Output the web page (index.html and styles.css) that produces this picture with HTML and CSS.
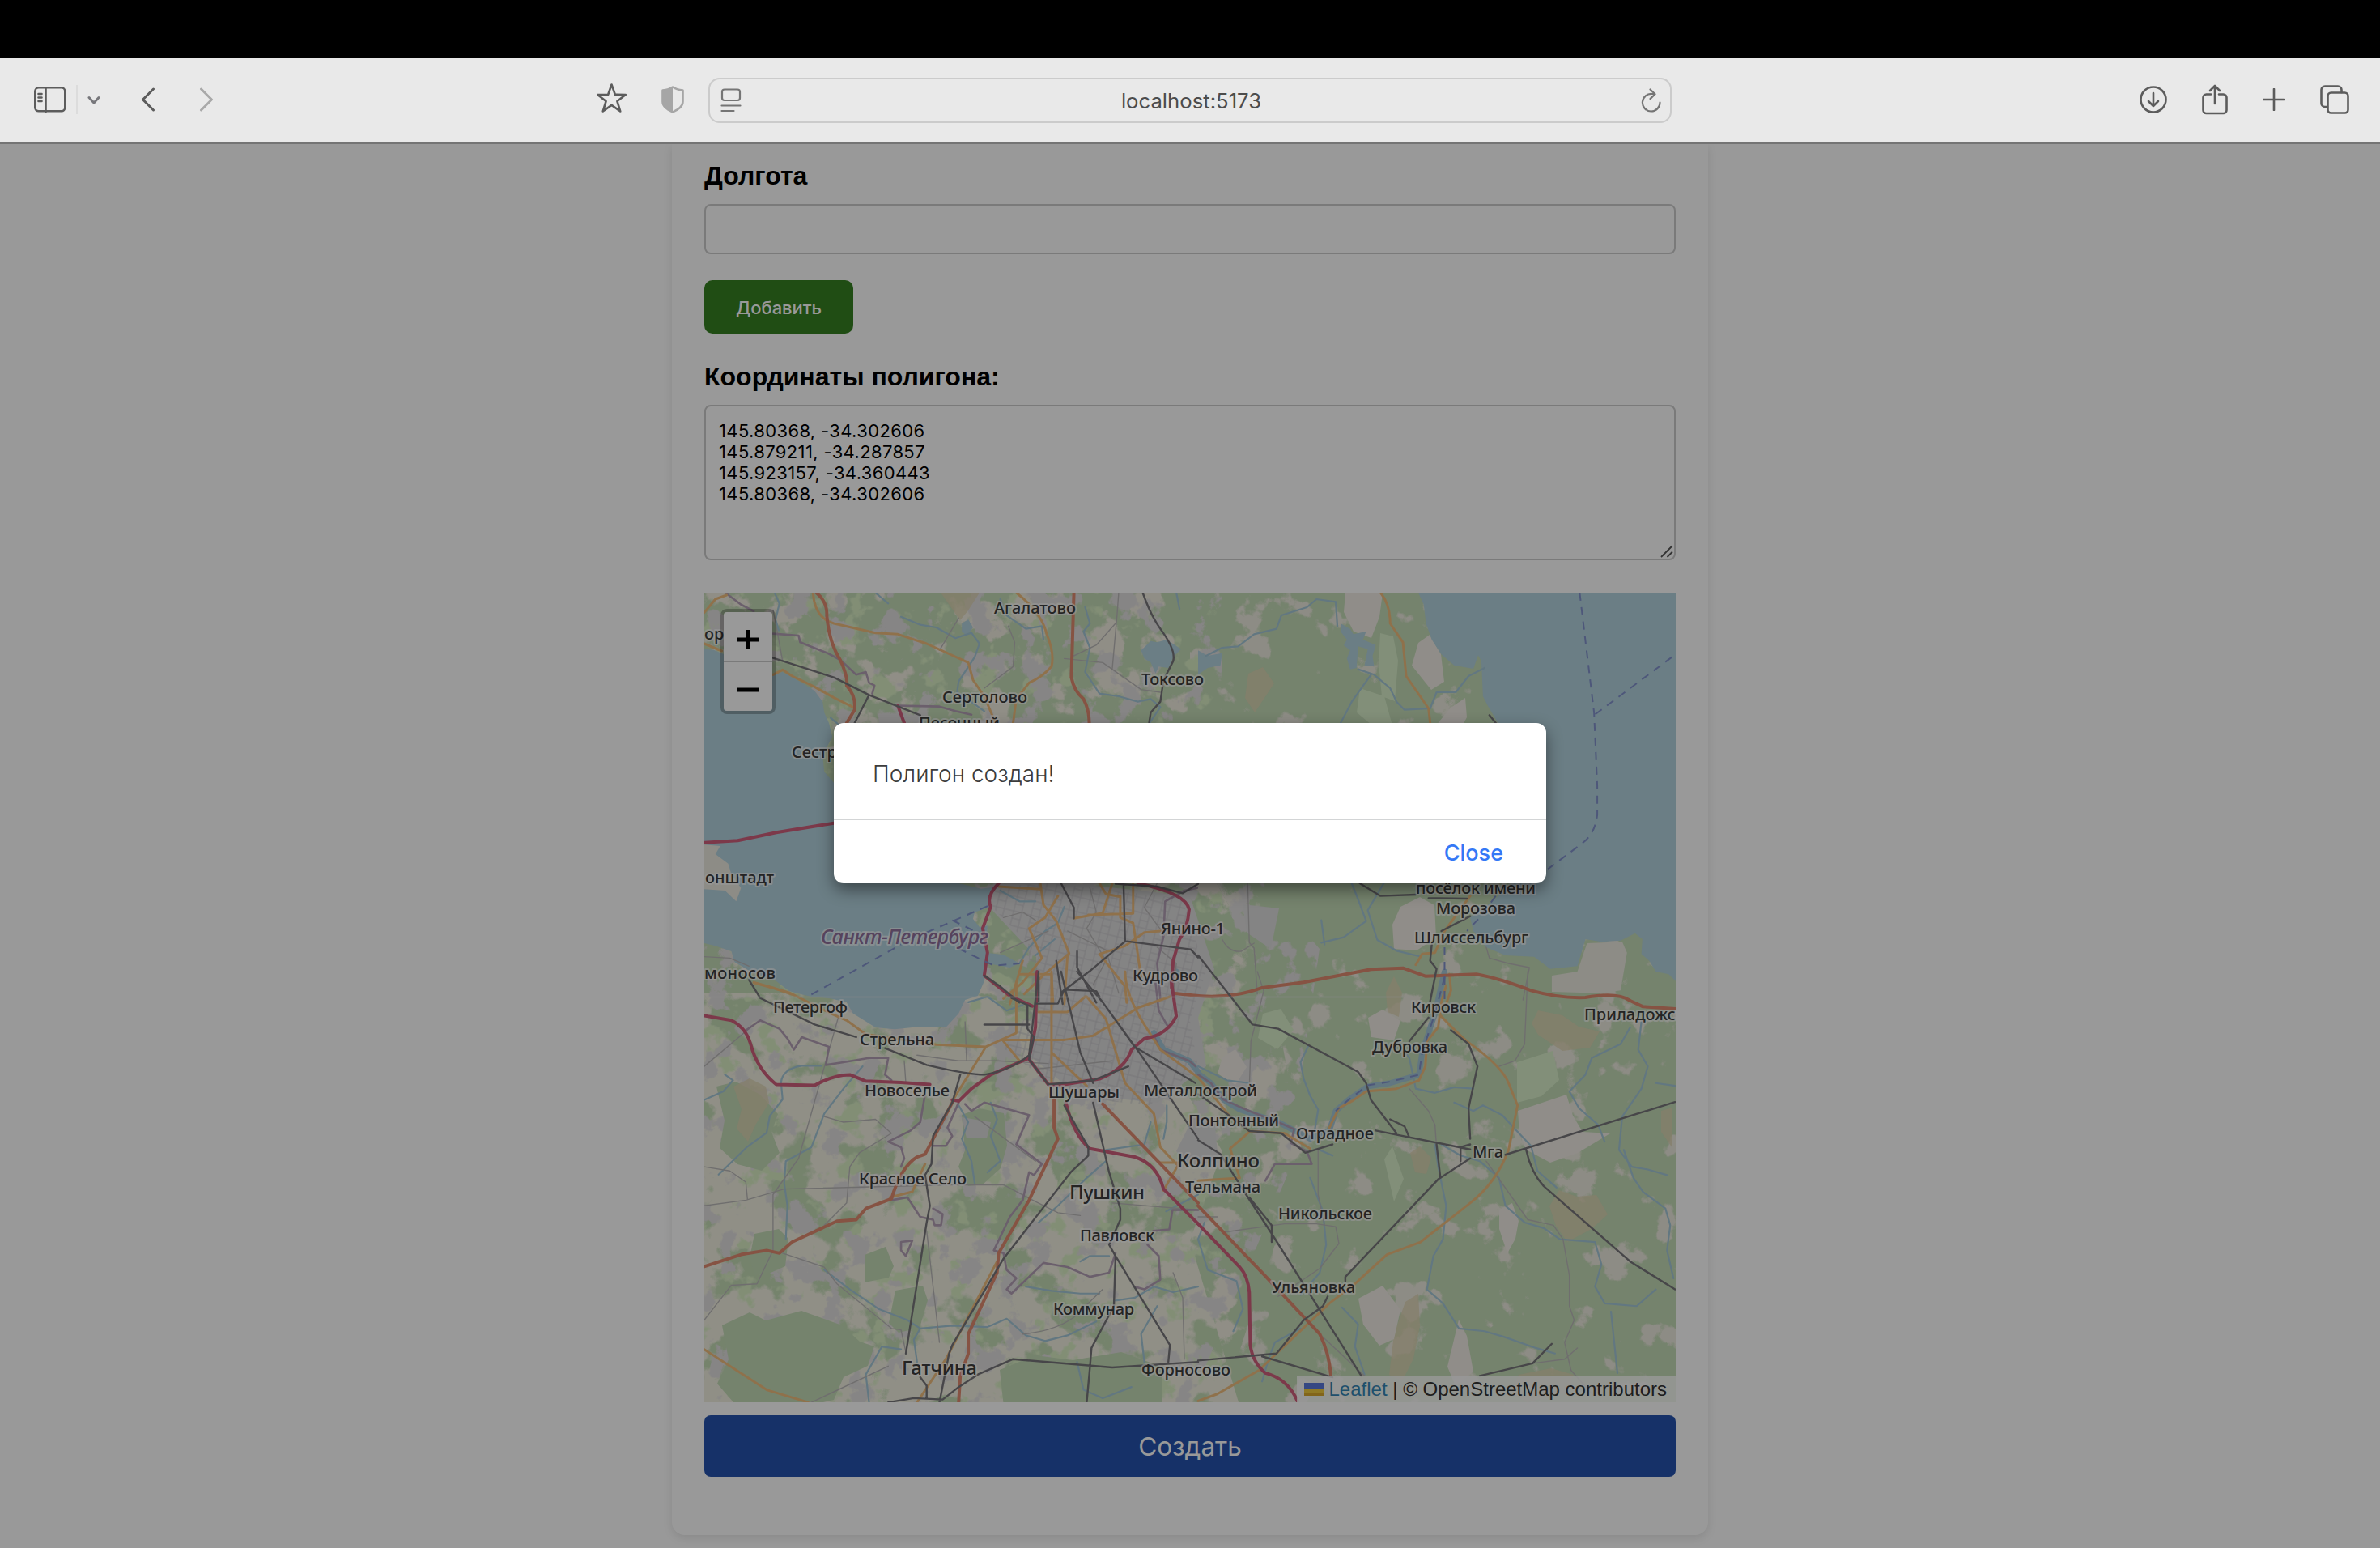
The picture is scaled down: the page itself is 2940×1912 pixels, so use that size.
FILE: index.html
```html
<!DOCTYPE html>
<html lang="ru">
<head>
<meta charset="utf-8">
<title>localhost:5173</title>
<link rel="stylesheet" href="styles.css">
</head>
<body>
<div class="notch-bar"></div>
<header class="toolbar">
  <div class="tools-left">
    <svg class="i-sidebar" width="40" height="32" viewBox="0 0 40 32"><rect x="1.3" y="1.3" width="37" height="29" rx="4.5"/><path d="M14.5 1v30M5.5 9h4M5.5 13.500h4M5.500 18h4"/></svg>
    <span class="divider"></span>
    <svg class="i-down" width="16" height="12" viewBox="0 0 16 12"><path d="M2 2.500l6 6.500 6-6.500"/></svg>
    <svg class="i-back" width="18" height="30" viewBox="0 0 18 30"><path d="M15.500 2L2.500 15l13 13"/></svg>
    <svg class="i-forward" width="18" height="30" viewBox="0 0 18 30"><path d="M2.500 2l13 13-13 13"/></svg>
  </div>
  <svg class="i-star" width="38" height="37" viewBox="0 0 38 37"><path d="M18.500 1.500l4.300 12.300 13 .2-10.400 8L29.200 34.500 18.500 26.900 7.800 34.500l3.800-12.500-10.400-8 13-.2z"/></svg>
  <svg class="i-shield" width="28" height="34" viewBox="0 0 28 34"><path d="M14 1.500c3.500 2.500 7.500 3.500 12.500 4v14c0 6.500-6 9.500-12.500 13-6.500-3.500-12.500-6.500-12.500-13v-14c5-.5 9-1.500 12.500-4z"/><path class="half" d="M14 1.500v31C7.500 29 1.500 26 1.500 19.500v-14c5-.5 9-1.500 12.500-4z"/></svg>
  <div class="address">
    <svg class="i-reader" width="26" height="30" viewBox="0 0 26 30"><rect x="2" y="1.500" width="22" height="13.500" rx="3"/><path d="M1.500 21.500h23M1.500 28h15"/></svg>
    <span class="url">localhost:5173</span>
    <svg class="i-reload" width="26" height="30" viewBox="0 0 26 30"><path d="M23.500 17.500A10.800 10.800 0 1 1 14 7h2.500M11.500 1.500l6 5.800-6 5.800"/></svg>
  </div>
  <div class="tools-right">
    <svg width="34" height="34" viewBox="0 0 34 34"><circle cx="17" cy="17" r="15.500"/><path d="M17 9v16M11 19l6 6 6-6"/></svg>
    <svg width="32" height="38" viewBox="0 0 32 38"><path d="M11 12.500H5.500a4 4 0 0 0-4 4V32a4 4 0 0 0 4 4h21a4 4 0 0 0 4-4V16.500a4 4 0 0 0-4-4H21M16 24V2M10 8l6-6 6 6"/></svg>
    <svg width="28" height="28" viewBox="0 0 28 28"><path d="M14 1v26M1 14h26"/></svg>
    <svg width="36" height="36" viewBox="0 0 36 36"><rect x="9.500" y="9.500" width="25" height="25" rx="4"/><path d="M9 27H6a4.500 4.500 0 0 1-4.500-4.500V6A4.500 4.500 0 0 1 6 1.500h16A4.500 4.500 0 0 1 26.500 6v3"/></svg>
  </div>
</header>
<main class="viewport">
  <section class="card">
    <label class="label" for="lng">Долгота</label>
    <input class="field" id="lng" type="text">
    <button class="add">Добавить</button>
    <label class="label label-coords" for="coords">Координаты полигона:</label>
    <div class="area-wrap">
      <textarea class="area" id="coords">145.80368, -34.302606
145.879211, -34.287857
145.923157, -34.360443
145.80368, -34.302606</textarea>
      <svg class="grip" width="16" height="16" viewBox="0 0 16 16"><path d="M1 15L15 1M8.500 15L15 8.500"/></svg>
    </div>
    <div class="map">
      <svg class="map-canvas" width="1200" height="1000" viewBox="0 0 1200 1000">
        <defs>
          <filter id="fields" x="0" y="0" width="100%" height="100%" color-interpolation-filters="sRGB">
            <feTurbulence type="fractalNoise" baseFrequency="0.021" numOctaves="5" seed="7"/>
            <feColorMatrix values="0 0 0 0 .945  0 0 0 0 .93  0 0 0 0 .88  14 0 0 0 -7.800"/>
            <feComposite in2="SourceAlpha" operator="in"/>
          </filter>
          <filter id="clearings" x="0" y="0" width="100%" height="100%" color-interpolation-filters="sRGB">
            <feTurbulence type="fractalNoise" baseFrequency="0.02" numOctaves="5" seed="12"/>
            <feColorMatrix values="0 0 0 0 .925  0 0 0 0 .915  0 0 0 0 .87  16 0 0 0 -10"/>
            <feComposite in2="SourceAlpha" operator="in"/>
          </filter>
          <filter id="woods" x="0" y="0" width="100%" height="100%" color-interpolation-filters="sRGB">
            <feTurbulence type="fractalNoise" baseFrequency="0.015" numOctaves="5" seed="21"/>
            <feColorMatrix values="0 0 0 0 .765  0 0 0 0 .855  0 0 0 0 .71  16 0 0 0 -8.800"/>
            <feComposite in2="SourceAlpha" operator="in"/>
          </filter>
          <filter id="meadow" x="0" y="0" width="100%" height="100%" color-interpolation-filters="sRGB">
            <feTurbulence type="fractalNoise" baseFrequency="0.03" numOctaves="4" seed="40"/>
            <feColorMatrix values="0 0 0 0 .85  0 0 0 0 .93  0 0 0 0 .77  0 12 0 0 -7.300"/>
            <feComposite in2="SourceAlpha" operator="in"/>
          </filter>
          <filter id="towns" x="0" y="0" width="100%" height="100%" color-interpolation-filters="sRGB">
            <feTurbulence type="fractalNoise" baseFrequency="0.028" numOctaves="5" seed="63"/>
            <feColorMatrix values="0 0 0 0 .88  0 0 0 0 .87  0 0 0 0 .87  0 0 16 0 -9.200"/>
            <feComposite in2="SourceAlpha" operator="in"/>
          </filter>
          <pattern id="streets" width="22" height="18" patternUnits="userSpaceOnUse" patternTransform="rotate(14)">
            <path d="M0 1h22M4 0v18M14 1v17M4 10h10" fill="none" stroke="#c6c5c9" stroke-width="1"/>
          </pattern>
        </defs>
        <rect width="1200" height="1000" fill="#c3dab6"/>
        <path d="M0 0H600V300L700 480 740 700 640 1000H0Z" filter="url(#fields)"/>
        <path d="M600 0H1200V1000H640L740 700 700 480 600 300Z" filter="url(#clearings)"/>
        <path d="M0 495H330L560 560 640 690 600 800 660 1000H0Z" fill="#f0efe0"/>
        <path d="M0 495H330L560 560 640 690 600 800 660 1000H0Z" filter="url(#woods)"/>
        <rect width="640" height="1000" filter="url(#meadow)"/>
        <path d="M0 0H640V300L760 440 720 720 600 1000H0Z" filter="url(#towns)"/>

        <!-- forests and bogs -->
        <g fill="#c3dab6">
          <path d="M318 645l22-8 30 6 4 40-8 28-22 20-18 2-12-24 8-20zM15 610l24-6 30 16 22 24-8 22 10 26-22 22-30-8-22-20 6-34zM62 792l30-6 12 12-4 34-18 8-20 2-6-20zM22 905l34-16 20 10 44-12 50 18 22 20 18 6-8 24-30 14-12 28-44 10-46-6-28 6-26-30 14-30zM236 862l34-6 6 18-10 34-26 6-12-12zM198 818l26-10 10 24-6 14-30 6zM365 960l44-18 46 6 60-10 50 18v50H370z"/>
        </g>
        <g fill="#ddd3b0" opacity=".75">
          <path d="M36 610l20-10 20 10 4 20-16 26-10 22-14-16 6-24zM292 0h48l-14 22-10 12zM872 692l12-8 14 14-6 20-14-2zM1030 516l30 6 20 14 26 6-12 20-34 4-30-20-8-14zM1056 738l22 8 24-2 14 24-20 18-30 16-14-20-8-24zM866 876l16-10 2 40-8 40-14 28-16-8 6-50zM1006 966l40-8 28 8-8 22-50 12-20-12zM1182 640l14-4v50l-14-20zM672 100l18-8 14 20-24 36-12-18zM842 494l10-20 10 20-4 30-14-6z"/>
        </g>
        <g fill="#f0ece4">
          <path d="M792 0h46l-4 30-10 26-22-8-12-24zM882 62l14-10 14 24 4 34-16 10-24-30zM922 142l18-12 2 24-12 22-18 6-8-18zM860 388l24-12 18 10 2 40-24 16-28-2-2-30zM1005 640l60-20 8 26 12 20 34 2-40 24-34 12-30-16-8-20zM982 762l16-8 8 22-4 22-10 18-10-30zM932 898l10 20 8 44-22 18-10-24zM808 872l30-16 22 30-8 36-18 8-20-26zM820 525l18-10 22 14-8 24-28-4zM640 574l16-10 14 22-14 22-22-14z"/>
        </g>
        <g fill="#d9efca">
          <path d="M835 50l16 4 6 30-4 50-16-6-4-40zM810 118l30 10 10 36-20 4-24-20zM1004 580l44-14 8 36-22 20-30 8zM690 520l22-6 16 26-20 24-24-14zM840 700l10-16 14 40-12 28z"/>
        </g>
        <g fill="#dddcdd">
          <path d="M330 365l90-10 180 20 30 90-20 60 10 60-60 45-100-10-60-50 15-40-5-80zM665 385l45 5-10 50-30-20zM606 644l24 10 5 46-32 10-20-20zM318 648l36 6-5 20-25 0z"/>
        </g>
        <path d="M335 368l85-10 170 20 30 90-20 60 10 60-60 45-100-10-80-60 35-50-5-80z" fill="url(#streets)"/>

        <!-- Gulf of Finland, Neva Bay, Lake Ladoga -->
        <g transform="translate(-10 -12) scale(.39541 .33333)" class="water">
          <path d="M25 245L55 248 82 262 150 300 240 338 270 330 330 370 370 400 395 440 400 480 415 520 425 570 395 640 400 700 430 740V870L520 900 700 1113H820L890 1133 945 1125 910 1165 920 1200 870 1220 865 1245 885 1275 910 1270 905 1370 960 1378 1010 1410 980 1425 910 1410 900 1475 880 1530 840 1545 820 1595 780 1647 700 1644 620 1654 560 1647 490 1595 470 1554 420 1540 360 1533 330 1525 290 1512 250 1475 170 1440 120 1405 110 1365 60 1345 25 1335Z"/>
          <path d="M1390 250l30-35 20 5 30-10 45 35-25 30-15 40-30-5-10 25-15-40-20-15zM830 150l20-15 15 30-20 30-15-15z"/>
          <path class="isle" d="M25 970L75 975 60 1005 100 1040 110 1080 140 1130 125 1180 90 1140 25 1135Z"/>
        </g>
        <g transform="translate(610 -12) scale(.39541 .33333)" class="water">
          <path d="M688 36L705 80 712 150 730 210 760 265 800 305 860 318 875 268 885 290 890 420 905 455 935 515 960 700 980 1113 920 1180 850 1240 860 1290 900 1350 960 1380 1050 1385 1100 1430 1185 1420 1210 1320 1260 1330 1320 1325 1365 1298 1388 1320 1385 1375 1410 1400 1430 1440 1470 1450 1492 1475V36Z"/>
          <path d="M445 150l30 20 10 20 40-10-10 30 40 20-10 40 5 40-30-5 10-60-30-10-5 80-20 5-10-40 10-30-20-20 10-20-20-30zM0 250l30 20 45-10-5 45-40 10-30 25z"/>
          <path class="isle" d="M1215 1335l110-5 15 40-20 140-60 10-155-5 0-60 80-15z"/>
        </g>

        <!-- rivers -->
        <g transform="translate(-10 -12) scale(.39541 .33333)" class="l river">
          <path d="M245 36l15 40-12 60 10 40M640 125l60 30 50 10 60 40 50-20 25 40-15 50-50 90-5 40 50 40 35 30M950 60l20 60 60 50 50-10 5 50M1215 90l15 60-20 30 20 60-15 90 45 80 60 10 60 20 40-10 30 30-40 70-60 0M1500 36l10 60M560 36l40 40M420 500l30 30"/>
          <path d="M1010 1410l30-60 50-60 40-30 20-60M950 1140l60 40 50 0M1060 1380l60-60"/>
        </g>
        <g transform="translate(610 -12) scale(.39541 .33333)" class="l river">
          <path d="M430 70l-60-10-30 30-80 30-15 50-70 20-50 45-50 5-50 30M430 70l5 90M500 320l50 20 50 50 20 50 25 30 80-5 20-60 60 0 40-60 50-30M540 340l-60 100-35 80M480 1113l20 60 25 80-70 60-70 20M580 1113l-50 100 30 110 60 40 70 20M385 1250l10 90"/>
        </g>
        <g transform="translate(-10 468) scale(.39541 .34439)" class="l river">
          <path d="M390 338h-60q-60 10-65 60l5 60-40 60-10 60-60 50-90 100M520 340l-60 80-60 90-40 120-80 50-5 80 10 80-5 120M25 460l60-30 30-40-25-20M820 480l30 60-20 60 30 80 10 80M920 470l20 60-20 60 30 90-40 40M1568 800l-100 60M1280 640l120-20 20-80M1070 900l60-60 90-100 60-60M1200 1040l30-20 60 0M1030 1130l80 15 90 10 60 0M1310 1180l60-10 60-40 60 20 78-20M400 1070l80 70 90 70 90 40 40 30 100-10 110 5 60-30 60 60 60 20 70-20 90-50M540 1545l-10-100 50-100 60 10M690 1400l-10-80 20-40M1400 1400l-10-100 50-100M1190 1400l20 100 60 30 90-40M1470 480v60l-10 60M850 110l60-20 60 50 50-20"/>
          <path class="neva" d="M1430 220l30 60 80 40 28 40M1500 0l10 10"/>
        </g>
        <g transform="translate(610 468) scale(.39541 .34439)" class="l river">
          <path d="M345 265l-25 60 10 60 20 60 25 50-10 70M0 340l90 50 70 10M620 250l40 60 20 110 60 15 60-20 60 5M800 470l60 30 30-20 60 35 40 50 50 60 20 90 60 60M1350 200l-30 60-90 50-20 60-50 60 30 60 60 60 20 60M1385 180l-10 100 30 60-20 80-60 100-10 120 40 60 50 10 60 20M1330 640l30 100 30 50 70 60 15 60-10 90 20 100M760 620l60 40 60 20 60 60 20 100 60 60 60 20 50 40 110 10 20 80-20 80 30 60 100 10 60-60M740 620l10 80 25 140-10 120-30 60-20 120 50 50 50 90 80 10 60 20 100 40 60 20M350 740l40 120 10 120-20 100-60 80M520 1445l-30-100 10-80-50-60M200 1470l20-80 20-60 80-50M20 900l-20 60 30 110 90 40 20 100-30 80M380 640l40 20M1290 1220l20 220M1430 400l60 10"/>
          <path class="neva" d="M770 0L740 150 700 290 690 370 600 400 530 412 470 460 430 500 410 570 350 600 250 540 130 495 80 460 40 400 0 365"/>
        </g>

        <!-- minor roads and tracks -->
        <g transform="translate(-10 -12) scale(.39541 .33333)" class="l minor">
          <path d="M820 130l-60 120M975 160l20 60-5 90-90 80M1320 36l-5 80-15 200M1150 280l120 15 120 100 60 10M1180 270l70-40 60-80M25 1385l80 5 60 30M240 100l10 60 20 130M1440 1113l-40 90 50 80M960 1240l60-20 40 30M950 1370l150-80M1230 1130l20 90-30 60 60 120-40 90M1160 1290l120 70 40 160M1440 1350l60 60-10 120"/>
        </g>
        <g transform="translate(-10 468) scale(.39541 .34439)" class="l minor">
          <path d="M25 340L170 200M445 160L320 670 240 800V1000L190 1120 110 1125 25 1250M25 840l130-20 120-40 520-15 165 0 100 60 70 40 70 10M25 700l80 15 50 40 5 60M270 1010l130 50 40 60 170 160 30 5 15 80M720 930l40 400M480 700l-10 130-70 80M400 520l60 20 100-10 50 50-100 70-30 50M650 320l5 80M840 180l5 140M690 300l130 20 120 0 160 10M1060 350l240-30M870 520l190 160M1020 1300q100-10 160-60l90-100M1490 1080l30 90 5 220M1300 830l268 25M360 1545l240-130"/>
        </g>
        <g transform="translate(610 -12) scale(.39541 .33333)" class="l minor">
          <path d="M155 1113l5 220 15 20 10 170M75 1320q20 50 60 45l40-30M900 1350l10 40 60 20 65 15-20 120"/>
        </g>
        <g transform="translate(610 468) scale(.39541 .34439)" class="l minor">
          <path d="M185 0l20 70-40 180-5 170M660 420l60 80 20 50 5 80M1030 0l-10 260-30 60-50 20M900 680l50 80 80 130 80 20 30 50 20 130 0 110 15 50-30 80 20 100 70 90M80 935l190-30 100 0 60 10 10 60-60 90-130 100M0 880l60 0M1045 1405l100-15 40-40M380 1300l140 150M375 640v160l20 110"/>
        </g>

        <!-- administrative boundary -->
        <g transform="translate(-10 -12) scale(.39541 .33333)" class="l bound">
          <path d="M95 40L140 80 180 105M240 188L320 195 325 220 410 260 450 285 500 340 530 330 540 370 557 380 550 410M630 455L760 458 810 475 860 488M1450 1540l-10-130 20-100 5-130 60-40 40-10"/>
        </g>
        <g transform="translate(-10 468) scale(.39541 .34439)" class="l bound">
          <path d="M150 215L200 175 260 205 285 240 305 280 330 235 415 270 405 335 460 325 540 310 600 310 590 370 610 390M715 440L700 540 670 570 600 610 640 630 650 670 640 700M820 470L785 560 800 590 780 625 740 625M840 475L860 500 900 470 1040 515 1000 620 1080 690 1055 730 1040 720 1020 820 980 880 930 1000 960 1010 970 1070 1000 1100 970 1140 985 1155 1085 1045 1160 1060 1230 1095 1290 1080 1310 1010M610 820L660 810 700 880 740 890 745 910 765 910 770 870 740 850M640 970L675 965 655 1020 640 1000ZM1410 980L1445 1020 1450 1105 1400 1140 1370 1130M1568 855l-80 0-10 70-50 5M1435 40l10 100 30 60M1430 230l20 50 90 40 20 20"/>
        </g>
        <g transform="translate(610 468) scale(.39541 .34439)" class="l bound">
          <path d="M0 370l40 30 40 60 80 40 100 45 40 20-10 50 50 30 15 45-115 0-30 60"/>
        </g>

        <!-- primary roads -->
        <g transform="translate(-10 -12) scale(.39541 .33333)" class="l primary">
          <path d="M365 36Q370 130 430 150L560 185 630 190 720 225 850 295 865 360 900 420 935 519M1000 36Q1080 110 1095 190 1120 260 1110 310 1080 350 1040 370L1000 430 990 519M25 110L60 60 95 45M25 225L80 252M240 340L270 322 300 345 370 385 430 425 490 460M180 1480l60 20 60 25"/>
          <path d="M1075 1113l10 80 40 60 40 120-80 80-60 70M945 1125l130 10M1130 1160l-40 80-50 40 40 110-60 90-60 60M1300 1113l-30 110-90 20M1325 1160v80l40 20 25 200M1260 1113l20 40 45 10M1365 1113v110M1225 1230l140-5M1450 1290l-50 5-60 50-80 30 80 120 5 60M1010 1450l100 0 5 110M980 1560l40-160M1160 1380l-10 180"/>
        </g>
        <g transform="translate(-10 468) scale(.39541 .34439)" class="l primary">
          <path d="M180 40L290 75 420 150 470 175 530 225 750 262 905 270 1000 220V40M905 270L800 465M940 1040L780 1390 690 1545M950 245H1150L1240 230 1380 130 1480 90M1340 0Q1340 80 1400 190L1450 280 1568 380M1110 0V400M1070 145h90l55-55M1110 290L1220 410M960 250l50 70M1220 90l60 80 60 230 90 110 20 120 50 60M1450 685h60l-50 100M25 1355L220 1500 350 1545M715 690l-40 100-70 20"/>
        </g>
        <g transform="translate(610 -12) scale(.39541 .33333)" class="l primary">
          <path d="M570 36Q600 80 600 150L640 220 650 345 720 465 725 519M680 1415L700 1375 740 1370 770 1290 850 1160M785 1450l5 60-15 50"/>
        </g>
        <g transform="translate(610 468) scale(.39541 .34439)" class="l primary">
          <path d="M775 50L760 110 750 200 715 250 710 340 690 390 620 420 525 430 480 465 440 490 410 560M755 155Q800 210 840 250 950 340 970 400L998 480 970 640Q930 760 850 830L695 970 590 1015 490 1120 410 1190 300 1310 190 1430 60 1515 0 1540M0 380L100 520 160 572 270 580 350 635M160 575L100 635 130 740 0 750"/>
        </g>

        <!-- trunk roads -->
        <g transform="translate(-10 -12) scale(.39541 .33333)" class="l trunk">
          <path d="M375 36Q410 70 408 120 415 220 450 285 475 350 470 380 500 420 495 470L470 519M1180 36L1172 350Q1180 400 1210 430 1228 470 1228 519M1490 1520L1568 1530"/>
        </g>
        <g transform="translate(-10 468) scale(.39541 .34439)" class="l trunk">
          <path d="M25 1058L140 1015 220 1000 260 1010 300 970 440 895 500 890 530 850 610 815Q640 700 690 665L715 655 800 470M1118 460V560L1130 600 1040 820 945 1010 940 1080 850 1300 850 1370 825 1450 820 1545M1270 475L1568 830"/>
        </g>
        <g transform="translate(610 -12) scale(.39541 .33333)" class="l trunk">
          <path d="M0 1530Q110 1540 200 1500L330 1480 540 1432 640 1427 710 1457 870 1450Q940 1465 1040 1510 1130 1540 1210 1536 1310 1515 1350 1548L1390 1570 1492 1578"/>
        </g>
        <g transform="translate(610 468) scale(.39541 .34439)" class="l trunk">
          <path d="M0 840L200 1080 380 1300Q410 1370 415 1450"/>
        </g>

        <!-- motorways -->
        <g transform="translate(-10 -12) scale(.39541 .33333)" class="l motorway">
          <path d="M25 962L130 955 250 925 430 890M630 455L650 519M945 1113Q905 1160 920 1200L895 1280 910 1370 900 1455 980 1530 1050 1568M1380 1113Q1530 1150 1540 1210 1535 1280 1510 1320L1490 1400 1485 1500"/>
        </g>
        <g transform="translate(-10 468) scale(.39541 .34439)" class="l motorway">
          <path d="M25 158L110 175Q155 200 170 260 190 350 250 405L370 408Q430 370 480 370L530 393 640 398 730 405M1065 0L1060 200 1040 310 920 370 860 420 820 465 800 460M1485 40L1500 160Q1470 230 1400 240L1360 280Q1340 350 1260 385L1150 405H1100L1040 315M1155 470Q1180 590 1230 635L1370 665Q1440 690 1460 780L1568 905"/>
        </g>
        <g transform="translate(610 468) scale(.39541 .34439)" class="l motorway">
          <path d="M0 905L130 1060Q155 1090 160 1150L163 1340Q170 1400 210 1440 280 1460 310 1540"/>
        </g>

        <!-- railways -->
        <g transform="translate(-10 -12) scale(.39541 .33333)" class="l rail">
          <path d="M240 278L430 350 540 415 700 490M540 415L495 519M1395 36Q1420 120 1450 170 1500 250 1490 290L1460 360 1450 440 1420 480 1415 519M1140 1113l40 90v40M1335 1113l5 215-110 110-90 80M1310 1115l130 10 80 25 48-35M1345 1328l100 15 100 15 23 30M1190 1365v60l60 130M1125 1400l20 160M1070 1460v90M900 1455l50 40 60 60"/>
        </g>
        <g transform="translate(-10 468) scale(.39541 .34439)" class="l rail">
          <path d="M165 30L200 95 370 190 500 235M590 275L720 335Q850 370 900 370 980 355 1040 300L1070 0M1035 125l0 80 20 30-15 80 60 90 140-15 110-50M985 95l60 30M1060 115h70l20-50 100 5 10 20M900 190h140M1140 0L1200 290 1240 400M1190 0L1270 110 1390 300 1568 600M1270 110l100 160 190 130M1150 480L1225 630V660L1170 720 960 1030 800 1340 790 1370 760 1545M1240 470L1290 720 1325 850V890L1290 980 1310 1020 1305 1200 1235 1350 1230 1420 1220 1545M1310 1020L1480 1340 1475 1400M600 1545L680 1530 770 1535 820 1490 880 1445 990 1390 1300 1420 1568 1400M700 1455l20 30v45M825 370L800 470 740 590 735 690 715 730 730 840 720 900 655 1370"/>
        </g>
        <g transform="translate(610 -12) scale(.39541 .33333)" class="l rail">
          <path d="M910 490L930 519M505 1113L570 1160 680 1155M720 1168L840 1170M760 1290L850 1235M0 1380L100 1530M730 1340L725 1400 745 1430 725 1550"/>
        </g>
        <g transform="translate(610 468) scale(.39541 .34439)" class="l rail">
          <path d="M95 80L170 190 250 205 500 360 525 400 540 460 620 580M600 530l45 25 15 40M555 570L850 638M820 680v-50l30-10M960 657L1490 468M1025 640Q1040 720 1080 770L1350 1040 1490 1140M850 670L750 745 460 1095V1110M720 165L660 250M790 210L845 260 873 340 845 490 850 600M0 605L70 655 150 800 230 940 510 1450M0 440L90 510 160 572 260 580 335 650 420 620M0 1395L245 1370 330 1250 390 1200 405 1165M745 620L757 740M880 1450L1045 1405 1105 1335M200 1380L420 1455M160 810l70 100v60"/>
        </g>

        <!-- ferry lines -->
        <g transform="translate(-10 -12) scale(.39541 .33333)" class="l ferry">
          <path d="M360 1525L640 1340M720 1295L915 1195M800 1250L870 1290M820 1355L930 1418 1010 1410"/>
        </g>
        <g transform="translate(610 -12) scale(.39541 .33333)" class="l ferry">
          <path d="M1192 36L1237 480 1247 750V860Q1240 930 1200 965L1093 1060M1480 275L1237 490M930 1160l-50 80-40 50M770 1350v200"/>
        </g>
        <g transform="translate(610 468) scale(.39541 .34439)" class="l ferry">
          <path d="M770 20L740 150 700 290 690 370 600 395 530 408 470 460 430 500"/>
        </g>
        <path d="M0 499.500H878" stroke="#e6e6e6" stroke-width="1.500" opacity=".8"/>

        <!-- place names -->
        <g class="place">
          <text x="358" y="26" textLength="101">Агалатово</text>
          <text x="540" y="114" textLength="77">Токсово</text>
          <text x="294" y="136" textLength="105">Сертолово</text>
          <text x="265" y="168" textLength="100">Песочный</text>
          <text x="108" y="204">Сестрорецк</text>
          <text x="0" y="58">ор</text>
          <text x="1" y="359" textLength="85">онштадт</text>
          <text x="0" y="477" textLength="88">моносов</text>
          <text x="564" y="422" textLength="79">Янино-1</text>
          <text x="529" y="480" textLength="81">Кудрово</text>
          <text x="879" y="372" textLength="148">посёлок имени</text>
          <text x="904" y="397" textLength="98">Морозова</text>
          <text x="877" y="433" textLength="141">Шлиссельбург</text>
          <text x="85" y="519" textLength="92">Петергоф</text>
          <text x="192" y="559" textLength="92">Стрельна</text>
          <text x="198" y="622" textLength="105">Новоселье</text>
          <text x="425" y="624" textLength="88">Шушары</text>
          <text x="543" y="622" textLength="140">Металлострой</text>
          <text x="598" y="659" textLength="112">Понтонный</text>
          <text x="731" y="675" textLength="96">Отрадное</text>
          <text x="594" y="741" textLength="93">Тельмана</text>
          <text x="191" y="731" textLength="133">Красное Село</text>
          <text x="709" y="774" textLength="116">Никольское</text>
          <text x="949" y="698" textLength="38">Мга</text>
          <text x="873" y="519" textLength="80">Кировск</text>
          <text x="825" y="568" textLength="93">Дубровка</text>
          <text x="1087" y="528">Приладожск</text>
          <text x="464" y="801" textLength="92">Павловск</text>
          <text x="701" y="865" textLength="103">Ульяновка</text>
          <text x="431" y="892" textLength="100">Коммунар</text>
          <text x="540" y="967" textLength="110">Форносово</text>
          <g class="town">
            <text x="584" y="710" textLength="102">Колпино</text>
            <text x="451" y="749" textLength="93">Пушкин</text>
            <text x="244" y="966" textLength="93">Гатчина</text>
          </g>
          <text class="region" x="144" y="434" textLength="207">Санкт-Петербург</text>
        </g>
      </svg>
      <div class="zoom">
        <button class="zoom-btn" aria-label="Zoom in"><svg width="28" height="28" viewBox="0 0 28 28"><path d="M14 2v24M1 14h26"/></svg></button>
        <button class="zoom-btn" aria-label="Zoom out"><svg width="28" height="28" viewBox="0 0 28 28"><path d="M1 14h26"/></svg></button>
      </div>
      <div class="credits"><svg width="24" height="16" viewBox="0 0 24 16"><path fill="#5a78db" d="M0 0h24v8H0z"/><path fill="#f0cb3e" d="M0 8h24v6H0z"/><path fill="#d9a92c" d="M0 13h24v3H0z"/></svg><span class="credit-text"><a class="leaflet">Leaflet</a> | © OpenStreetMap contributors</span></div>
    </div>
    <button class="create">Создать</button>
  </section>
  <div class="backdrop">
    <div class="dialog" role="alertdialog">
      <p class="message">Полигон создан!</p>
      <div class="actions"><button class="close">Close</button></div>
    </div>
  </div>
</main>
</body>
</html>
```
FILE: styles.css
```css
* { box-sizing: border-box; }
body {
  margin: 0;
  width: 2940px;
  height: 1912px;
  display: flex;
  flex-direction: column;
  overflow: hidden;
  background: #fff;
  font-family: Inter, "Liberation Sans", sans-serif;
}
button { border: 0; padding: 0; font-family: inherit; }
svg { display: block; flex: none; }

.notch-bar { height: 72px; background: #000; flex: none; }

.toolbar {
  height: 106px;
  flex: none;
  display: flex;
  align-items: center;
  padding: 0 38px 2px 42px;
  background: #e9e9e9;
  border-bottom: 2px solid #747474;
}
.toolbar svg {
  fill: none;
  stroke: #5c5c5c;
  stroke-width: 2.6;
  stroke-linecap: round;
  stroke-linejoin: round;
}
.tools-left { display: flex; align-items: center; width: 695px; }
.divider { width: 2px; height: 36px; margin: 0 12px; background: #dcdcdc; }
.toolbar .i-down { stroke: #77777b; stroke-width: 3; margin-top: 2px; }
.i-back { margin-left: 50px; }
.i-forward { margin-left: 54px; }
.toolbar .i-back { stroke-width: 3; }
.toolbar .i-forward { stroke: #a9a9a9; stroke-width: 3; }
.toolbar .i-star { margin-top: -3px; }
.toolbar .i-shield { stroke: #a6a6a6; margin: 0 30px 0 42px; }
.toolbar .half { fill: #a6a6a6; stroke: none; }
.address {
  display: flex;
  align-items: center;
  justify-content: space-between;
  width: 1190px;
  height: 56px;
  margin-top: 2px;
  padding: 0 10px 0 13px;
  border: 2px solid #cbcbcb;
  border-radius: 14px;
}
.url { font-size: 25.7px; line-height: 32px; padding-top: 2px; color: #4c4c4c; }
.toolbar .i-reader, .toolbar .i-reload { stroke: #757575; stroke-width: 2.2; }
.tools-right { display: flex; align-items: center; gap: 43px; margin-left: auto; }

.viewport { position: relative; flex: 1; overflow: hidden; background: #fff; }
.card {
  display: flex;
  flex-direction: column;
  align-items: flex-start;
  width: 1280px;
  height: 1718px;
  margin: 0 auto;
  padding: 21px 40px 0;
  border-radius: 0 0 16px 16px;
  background: #fff;
  box-shadow: 0 4px 12px rgba(0, 0, 0, .1);
}
.label {
  height: 36px;
  font: bold 32px/36px "Liberation Sans", Arial, sans-serif;
  color: #000;
}
.field {
  width: 100%;
  height: 62px;
  margin: 17px 0 32px;
  border: 2px solid #ccc;
  border-radius: 8px;
  background: #fff;
}
.add {
  width: 184px;
  height: 66px;
  padding-top: 2px;
  border-radius: 10px;
  background: #368022;
  color: #fff;
  font-size: 22px;
  font-weight: 500;
  letter-spacing: -.05px;
}
.label-coords { margin: 35px 0 17px; }
.area-wrap { position: relative; width: 100%; height: 192px; }
.area {
  display: block;
  width: 100%;
  height: 100%;
  padding: 17px 16px;
  border: 2px solid #ccc;
  border-radius: 8px;
  resize: none;
  overflow: hidden;
  font: 22px/26px Inter, sans-serif;
  letter-spacing: .36px;
  color: #000;
  background: #fff;
}
.grip { position: absolute; right: 3px; bottom: 3px; fill: none; stroke: #555; stroke-width: 1.8; }

.map { position: relative; width: 1200px; height: 1000px; margin: 40px 0 16px; overflow: hidden; }
.water { fill: #b2d2de; }
.isle { fill: #ebe9df; }
.l { fill: none; stroke-linejoin: round; stroke-linecap: round; }
.l path { vector-effect: non-scaling-stroke; }
.river { stroke: #a3c7d7; stroke-width: 2.2; }
.river .neva { stroke-width: 7; }
.minor { stroke: #bab8b8; stroke-width: 1.4; }
.bound { stroke: #b29fb5; stroke-width: 2.6; }
.primary { stroke: #efbd7e; stroke-width: 3; }
.trunk { stroke: #e08a70; stroke-width: 4; }
.motorway { stroke: #cf5f7c; stroke-width: 4; }
.rail { stroke: #77767a; stroke-width: 2.4; }
.ferry { stroke: #8292cc; stroke-width: 2; stroke-dasharray: 10 8; stroke-linecap: butt; }
.place {
  font-family: "Noto Sans", sans-serif;
  font-size: 20px;
  font-weight: 500;
  fill: #3c3c3c;
  stroke: rgba(255, 255, 255, .6);
  stroke-width: 4px;
  stroke-linejoin: round;
  paint-order: stroke;
}
.town { font-size: 24px; }
.region { font-size: 25px; font-style: italic; fill: #8f719c; }

.zoom {
  position: absolute;
  left: 20px;
  top: 20px;
  width: 68px;
  border: 4px solid rgba(0, 0, 0, .25);
  border-radius: 8px;
  background-clip: padding-box;
}
.zoom-btn {
  display: flex;
  align-items: center;
  justify-content: center;
  width: 60px;
  height: 60px;
  background: #fff;
  border-radius: 0 0 4px 4px;
}
.zoom-btn:first-child { height: 62px; border-bottom: 2px solid #ccc; border-radius: 4px 4px 0 0; }
.zoom-btn svg { stroke: #000; stroke-width: 5; margin-top: 8px; }
.credits {
  position: absolute;
  right: 0;
  bottom: 0;
  width: 468px;
  height: 32px;
  padding: 0 11px 0 9px;
  display: flex;
  align-items: center;
  justify-content: space-between;
  background: rgba(255, 255, 255, .8);
  font: 24px/32px "Liberation Sans", Arial, sans-serif;
  color: #333;
  white-space: nowrap;
}
.leaflet { color: #3585b5; }
.create {
  width: 100%;
  height: 76px;
  border-radius: 8px;
  background: #2553ad;
  color: #fff;
  font-size: 31.5px;
}

.backdrop {
  position: absolute;
  inset: 0;
  display: grid;
  place-items: center;
  padding-bottom: 106px;
  background: rgba(0, 0, 0, .4);
}
.dialog {
  width: 880px;
  height: 198px;
  border-radius: 12px;
  background: #fff;
  box-shadow: 0 8px 20px rgba(0, 0, 0, .45);
}
.message {
  margin: 0;
  height: 118px;
  padding: 45px 48px 0;
  font-size: 28px;
  font-weight: 300;
  line-height: 36px;
  color: #3c3c3c;
}
.actions {
  display: flex;
  justify-content: flex-end;
  height: 80px;
  padding: 2px 53px 0;
  border-top: 2px solid #d3d5d6;
}
.close { background: none; color: #3478f6; font-size: 27px; font-weight: 500; }
```
